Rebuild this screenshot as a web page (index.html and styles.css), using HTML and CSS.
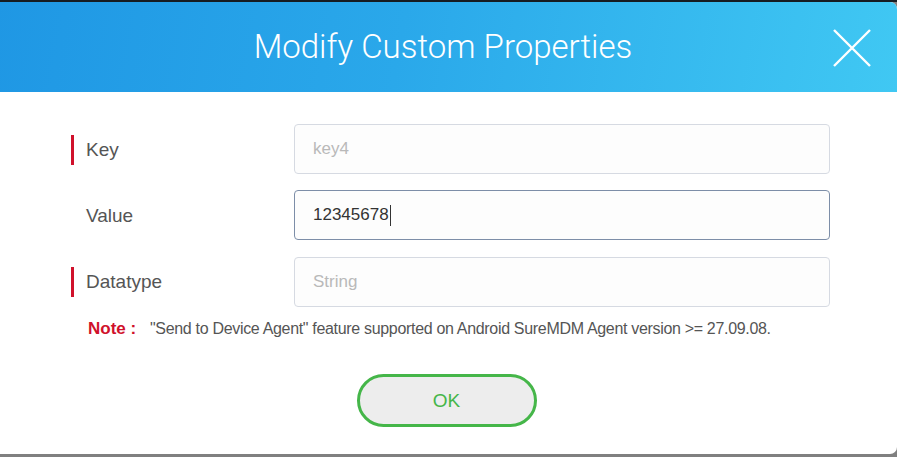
FILE: index.html
```html
<!DOCTYPE html>
<html>
<head>
<meta charset="utf-8">
<link rel="stylesheet" href="styles.css">
</head>
<body>
<div class="dialog">
  <div class="header">
    <h1 class="title">Modify Custom Properties</h1>
    <button class="close" aria-label="Close">
      <svg width="40" height="40" viewBox="0 0 40 40"><path d="M2 2 L38 38 M38 2 L2 38" stroke="#fff" stroke-width="2.4" fill="none"/></svg>
    </button>
  </div>
  <div class="body">
    <div class="form">
      <div class="label required">Key</div>
      <div class="field"><span class="placeholder">key4</span></div>
      <div class="label">Value</div>
      <div class="field focus"><span class="value">12345678</span><span class="caret"></span></div>
      <div class="label required">Datatype</div>
      <div class="field"><span class="placeholder">String</span></div>
    </div>
    <p class="note"><span class="note-label">Note :</span><span class="note-text">"Send to Device Agent" feature supported on Android SureMDM Agent version &gt;= 27.09.08.</span></p>
    <div class="actions"><button class="ok">OK</button></div>
  </div>
</div>
</body>
</html>
```
FILE: styles.css
```css
html {
  background: linear-gradient(#161c22 0 2px, #808080 2px);
  height: 100%;
}
body {
  margin: 0;
  height: 457px;
  overflow: hidden;
}
.dialog {
  margin: 2px 0 0 -6px;
  width: 903px;
  height: 452px;
  background: #fff;
  border-radius: 7px;
  overflow: hidden;
  display: flex;
  flex-direction: column;
}
.header {
  height: 90px;
  flex: none;
  background: linear-gradient(100deg, #1f97e4 0%, #2aa8ea 45%, #40c8f3 100%);
  display: flex;
  align-items: center;
  justify-content: center;
  position: relative;
}
.title {
  margin: 0;
  font-family: Roboto, "Noto Sans", sans-serif;
  font-weight: 300;
  font-size: 33px;
  color: #fff;
  padding-right: 5px;
  padding-bottom: 2px;
}
.close {
  position: absolute;
  right: 25px;
  top: 26px;
  width: 40px;
  height: 40px;
  padding: 0;
  border: 0;
  background: none;
}
.close svg { display: block; }
.body {
  padding: 32px 0 0 77px;
  font-family: "Liberation Sans", Arial, sans-serif;
}
.form {
  display: grid;
  grid-template-columns: 223px 536px;
  grid-template-rows: 50px 50px 50px;
  row-gap: 16px;
  align-items: center;
}
.form > .field:last-child { margin-top: 1px; }
.label {
  font-size: 19px;
  color: #555;
  padding-left: 12px;
  line-height: 30px;
  border-left: 3px solid transparent;
  margin-top: 2px;
}
.label.required { border-left-color: #d0112b; }
.field {
  height: 48px;
  border: 1px solid #d6dae2;
  border-radius: 4px;
  background: #fdfdfd;
  display: flex;
  align-items: center;
  padding-left: 18px;
  font-size: 17px;
}
.field.focus { border-color: #7d8ea8; }
.placeholder { color: #b9b9b9; }
.value { color: #333; }
.caret {
  display: inline-block;
  width: 1px;
  height: 21px;
  background: #333;
  margin-left: 1px;
}
.note {
  margin: 13px 0 0 17px;
  display: flex;
  align-items: baseline;
}
.note-label {
  color: #d0112b;
  font-weight: bold;
  font-size: 17px;
  width: 62px;
  flex: none;
}
.note-text {
  color: #555;
  font-size: 16px;
  letter-spacing: -0.32px;
}
.actions {
  display: flex;
  justify-content: center;
  padding-right: 75px;
  margin-top: 35px;
}
.ok {
  width: 180px;
  height: 53px;
  border: 3px solid #45b649;
  border-radius: 27px;
  background: #ededed;
  color: #45b649;
  font-family: "Liberation Sans", Arial, sans-serif;
  font-size: 19px;
}
```
